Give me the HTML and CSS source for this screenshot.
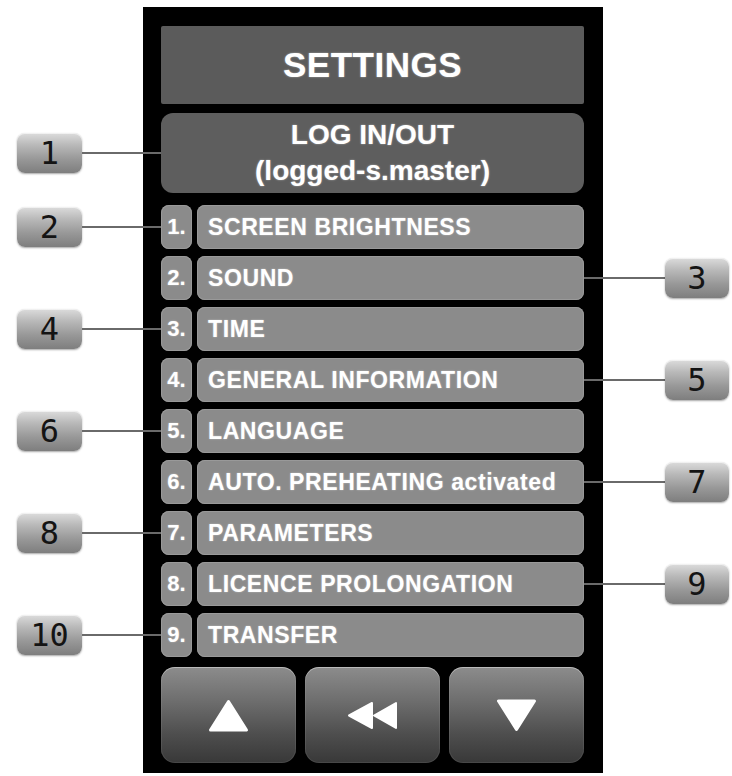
FILE: index.html
```html
<!DOCTYPE html>
<html>
<head>
<meta charset="utf-8">
<link rel="stylesheet" href="styles.css">
</head>
<body>
<div class="figure">
  <div class="line head">
    <div class="side side-l"></div>
    <div class="slice"><div class="title">SETTINGS</div></div>
    <div class="side side-r"></div>
  </div>
  <div class="line login">
    <div class="side side-l"><span class="tag">1</span><span class="wire"></span></div>
    <div class="slice wl"><div class="loginbox"><span>LOG IN/OUT</span><span>(logged-s.master)</span></div></div>
    <div class="side side-r"></div>
  </div>
  <div class="line row">
    <div class="side side-l"><span class="tag">2</span><span class="wire"></span></div>
    <div class="slice wl"><div class="num">1.</div><div class="label">SCREEN BRIGHTNESS</div></div>
    <div class="side side-r"></div>
  </div>
  <div class="line row">
    <div class="side side-l"></div>
    <div class="slice wr"><div class="num">2.</div><div class="label">SOUND</div></div>
    <div class="side side-r"><span class="wire"></span><span class="tag">3</span></div>
  </div>
  <div class="line row">
    <div class="side side-l"><span class="tag">4</span><span class="wire"></span></div>
    <div class="slice wl"><div class="num">3.</div><div class="label">TIME</div></div>
    <div class="side side-r"></div>
  </div>
  <div class="line row">
    <div class="side side-l"></div>
    <div class="slice wr"><div class="num">4.</div><div class="label">GENERAL INFORMATION</div></div>
    <div class="side side-r"><span class="wire"></span><span class="tag">5</span></div>
  </div>
  <div class="line row">
    <div class="side side-l"><span class="tag">6</span><span class="wire"></span></div>
    <div class="slice wl"><div class="num">5.</div><div class="label">LANGUAGE</div></div>
    <div class="side side-r"></div>
  </div>
  <div class="line row">
    <div class="side side-l"></div>
    <div class="slice wr"><div class="num">6.</div><div class="label">AUTO. PREHEATING activated</div></div>
    <div class="side side-r"><span class="wire"></span><span class="tag">7</span></div>
  </div>
  <div class="line row">
    <div class="side side-l"><span class="tag">8</span><span class="wire"></span></div>
    <div class="slice wl"><div class="num">7.</div><div class="label">PARAMETERS</div></div>
    <div class="side side-r"></div>
  </div>
  <div class="line row">
    <div class="side side-l"></div>
    <div class="slice wr"><div class="num">8.</div><div class="label">LICENCE PROLONGATION</div></div>
    <div class="side side-r"><span class="wire"></span><span class="tag">9</span></div>
  </div>
  <div class="line row">
    <div class="side side-l"><span class="tag">10</span><span class="wire"></span></div>
    <div class="slice wl"><div class="num">9.</div><div class="label">TRANSFER</div></div>
    <div class="side side-r"></div>
  </div>
  <div class="line foot">
    <div class="side side-l"></div>
    <div class="slice">
      <div class="buttons">
        <div class="btn"><svg width="41" height="33" viewBox="0 0 41 33"><polygon points="20.5,2.5 38.5,31 2.5,31" fill="#fff" stroke="#fff" stroke-width="3" stroke-linejoin="round"/></svg></div>
        <div class="btn"><svg width="51" height="29" viewBox="0 0 51 29"><polygon points="2,14.5 25,2 25,27" fill="#fff" stroke="#fff" stroke-width="2" stroke-linejoin="round"/><polygon points="27,14.5 49,2 49,27" fill="#fff" stroke="#fff" stroke-width="2" stroke-linejoin="round"/></svg></div>
        <div class="btn"><svg width="41" height="33" viewBox="0 0 41 33"><polygon points="2.5,2 38.5,2 20.5,30.5" fill="#fff" stroke="#fff" stroke-width="3" stroke-linejoin="round"/></svg></div>
      </div>
    </div>
    <div class="side side-r"></div>
  </div>
</div>
</body>
</html>
```
FILE: styles.css
```css
html, body {
  margin: 0;
  padding: 0;
  background: #fff;
}
body {
  padding-top: 7px;
  font-family: "Liberation Sans", Arial, sans-serif;
}
.figure {
  width: 732px;
}
.line {
  display: flex;
  --pt: 0px;
  --pb: 7px;
  --h: 44px;
}
.line.head { --pt: 19px; --pb: 9px; --h: 78px; }
.line.login { --h: 80px; --pb: 12px; }
.line.foot { --pt: 3px; --pb: 10px; --h: 96px; }

.side, .slice {
  padding-top: var(--pt);
  padding-bottom: var(--pb);
}
.side {
  display: flex;
  align-items: center;
  height: var(--h);
}
.side-l {
  padding-left: 17px;
  width: 126px;
}
.side-r {
  width: 126px;
  padding-right: 3px;
}
.slice {
  width: 423px;
  padding-left: 18px;
  padding-right: 19px;
  background: #000;
  display: flex;
  gap: 5px;
}
.slice.wl {
  background: linear-gradient(#6a6a6a, #6a6a6a) no-repeat left 0 top calc(var(--pt) + var(--h) / 2 - 1px) / 18px 2px, #000;
}
.slice.wr {
  background: linear-gradient(#6a6a6a, #6a6a6a) no-repeat right 0 top calc(var(--pt) + var(--h) / 2 - 1px) / 19px 2px, #000;
}
.wire {
  flex: 1;
  height: 2px;
  background: #6a6a6a;
}
.tag {
  width: 65px;
  height: 40px;
  border-radius: 8px;
  background: linear-gradient(180deg, #dcdcdc 0%, #b9b9b9 30%, #989898 65%, #7e7e7e 100%);
  box-shadow: 0 1px 2px rgba(0, 0, 0, 0.35), inset 0 1px 0 rgba(255, 255, 255, 0.6);
  display: flex;
  align-items: center;
  justify-content: center;
  font-family: "DejaVu Sans Mono", monospace;
  font-size: 32px;
  color: #141414;
  line-height: 1;
}
.side-r .tag { width: 64px; }

.title {
  flex: 1;
  height: 78px;
  background: #5b5b5b;
  border-radius: 2px;
  display: flex;
  align-items: center;
  justify-content: center;
  color: #fff;
  font-weight: bold;
  font-size: 35px;
  letter-spacing: 0.5px;
  text-shadow: 0 0 2px rgba(255, 255, 255, 0.5);
}
.loginbox {
  flex: 1;
  height: 80px;
  background: #5e5e5e;
  border-radius: 12px;
  display: flex;
  flex-direction: column;
  align-items: center;
  justify-content: center;
  color: #fff;
  font-weight: bold;
  font-size: 28px;
  line-height: 36px;
  text-shadow: 0 0 2px rgba(255, 255, 255, 0.5);
}
.num, .label {
  height: 44px;
  background: #8b8b8b;
  border-radius: 8px;
  box-shadow: inset 0 0 0 1px #999;
  display: flex;
  align-items: center;
  color: #fff;
  font-weight: bold;
  font-size: 23px;
  letter-spacing: 0.6px;
  text-shadow: 0 0 2px rgba(255, 255, 255, 0.45);
}
.num {
  width: 31px;
  justify-content: center;
  letter-spacing: 0;
  font-size: 22px;
}
.label {
  flex: 1;
  padding-left: 11px;
}
.buttons {
  flex: 1;
  display: grid;
  grid-template-columns: repeat(3, 1fr);
  gap: 9px;
}
.btn {
  height: 96px;
  border-radius: 14px;
  background: linear-gradient(180deg, #8c8c8c 0%, #6e6e6e 35%, #4e4e4e 70%, #383838 100%);
  box-shadow: inset 0 1px 0 rgba(255, 255, 255, 0.35), inset 0 0 0 1px rgba(255, 255, 255, 0.08);
  display: flex;
  align-items: center;
  justify-content: center;
}
```
